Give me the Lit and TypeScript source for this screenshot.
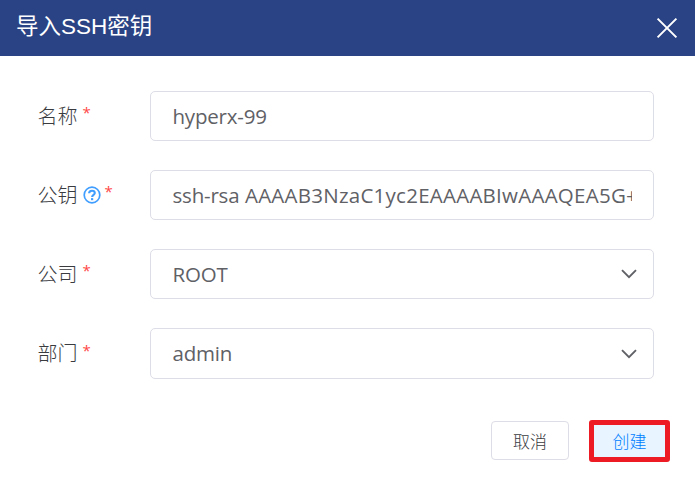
import { LitElement, html, css, nothing } from "lit";
import { customElement, property } from "lit/decorators.js";

@customElement("form-row")
class FormRow extends LitElement {
  @property() label = "";
  @property() value = "";
  @property() key = "";
  @property({ type: Boolean }) help = false;
  @property({ type: Boolean }) select = false;

  static styles = css`
    :host { display: grid; grid-template-columns: 112px 504px; align-items: center; height: 50px; }
    .label { display: flex; align-items: center; height: 50px; font-size: 20px; font-weight: 300; color: #393b3f; white-space: nowrap; }
    .text { margin: -2px 0 0 -0.5px; }
    .help { width: 18px; height: 18px; margin-left: 5px; display: block; }
    .star { color: #ff4747; font: 400 15px/20px "Open Sans", sans-serif; margin: -8px 0 0 5px; }
    .help + .star { margin-left: 4px; }
    .box { box-sizing: border-box; height: 100%; border: 1px solid #dcdde6; border-radius: 5px; background: #fff;
      padding: 0 21px 0 22px; display: flex; align-items: center; justify-content: space-between; }
    .value { font: 400 20.5px/30px "Open Sans", sans-serif; letter-spacing: -0.2px; color: #5f6166; white-space: pre; overflow: hidden; flex: 1;
      margin: -1px 0 0 -0.5px; }
    .key { letter-spacing: 0.25px; }
    .arrow { width: 16px; height: 10px; margin-right: -5px; display: block; flex: none; }
  `;

  render() {
    return html`
      <div class="label">
        <span class="text">${this.label}</span>
        ${this.help
          ? html`<svg class="help" viewBox="0 0 18 18" fill="none" stroke="#409eff">
              <circle cx="9" cy="9" r="7.8" stroke-width="1.7" />
              <path d="M6.1 7.3C6.1 5.4 7.3 4.7 9 4.7s2.8 0.9 2.8 2.3c0 1.8-2.7 1.9-2.7 4" stroke-width="2.1" />
              <path d="M8 12.1h2.2v2.1H8z" fill="#409eff" stroke="none" />
            </svg>`
          : nothing}
        <span class="star">*</span>
      </div>
      <div class="box">
        <span class="value">${this.value}${this.key ? html`<span class="key"> ${this.key}</span>` : nothing}</span>
        ${this.select
          ? html`<svg class="arrow" viewBox="0 0 16 10" fill="none" stroke="#5f6166" stroke-width="1.9">
              <path d="M1 1.2L8 8.2L15 1.2" />
            </svg>`
          : nothing}
      </div>
    `;
  }
}

@customElement("app-root")
class AppRoot extends LitElement {
  static styles = css`
    :host { display: flex; flex-direction: column; width: 695px; height: 485px; background: #fff; overflow: hidden;
      font-family: "Noto Sans CJK SC", sans-serif; }
    .header { box-sizing: border-box; height: 56px; background: #2a4384; color: #fff; display: flex; align-items: center;
      justify-content: space-between; padding: 0 17px 0 16px; }
    .title { font: 400 22.5px/32px "Liberation Sans", "Noto Sans CJK SC", sans-serif; margin-top: -3px; white-space: nowrap; }
    .close { width: 22px; height: 22px; display: block; }
    .form { display: grid; row-gap: 29px; padding: 35px 0 0 38px; }
    .last { height: 51px; }
    .footer { display: flex; justify-content: flex-end; align-items: flex-start; gap: 20px; padding: 41px 25px 0 0; }
    .btn { box-sizing: border-box; font: 300 17px/24px "Noto Sans CJK SC", sans-serif; display: flex;
      align-items: center; justify-content: center; }
    .cancel { width: 78px; height: 39px; margin-top: 1px; border: 1px solid #dcdde6; border-radius: 4px; color: #393b3f; }
    .create { width: 81px; height: 42px; border: 5px solid #ed1c24; border-radius: 3px; background: #e8f4ff; color: #007fff; }
  `;

  render() {
    return html`
      <div class="header">
        <span class="title">导入SSH密钥</span>
        <svg class="close" viewBox="0 0 22 22" stroke="#fff" stroke-width="2" fill="none">
          <path d="M1.6 1.6L20.4 20.4M20.4 1.6L1.6 20.4" />
        </svg>
      </div>
      <div class="form">
        <form-row label="名称" value="hyperx-99"></form-row>
        <form-row label="公钥" help value="ssh-rsa" key="AAAAB3NzaC1yc2EAAAABIwAAAQEA5G+"></form-row>
        <form-row label="公司" select value="ROOT"></form-row>
        <form-row class="last" label="部门" select value="admin"></form-row>
      </div>
      <div class="footer">
        <div class="btn cancel">取消</div>
        <div class="btn create">创建</div>
      </div>
    `;
  }
}
